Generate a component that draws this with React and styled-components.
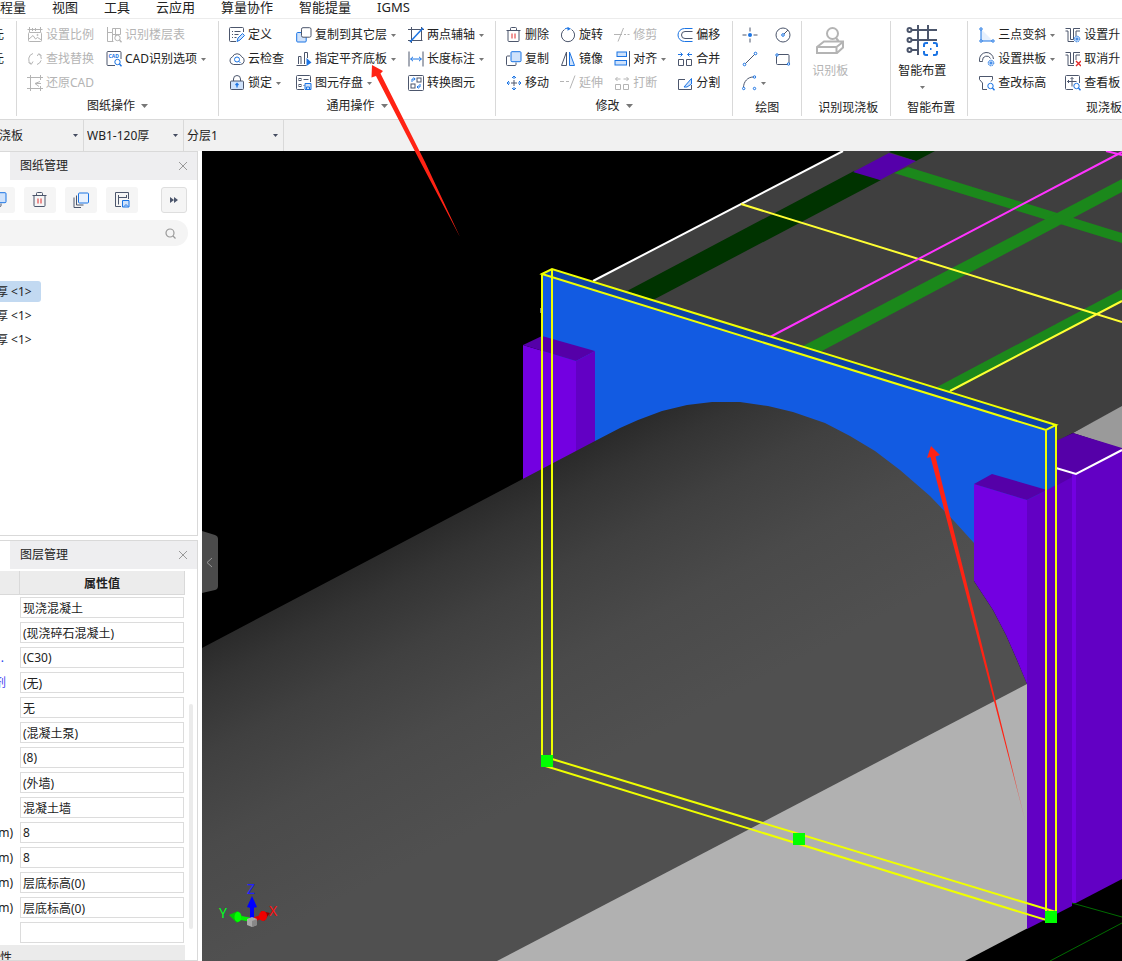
import React, { useState } from 'react'
import styled, { createGlobalStyle, css } from 'styled-components'

const GlobalStyle = createGlobalStyle`
    :root {
        --ink: #222;
        --line: #d9d9d9;
        --icon: #4c566c;
        --blue: #1b74e4;
        --tint: #cfe2fb;
        --muted: #b4b4b4;
    }

    * {
        box-sizing: border-box;
    }

    body {
        margin: 0;
        background: #fff;
        color: var(--ink);
    }

    body, button, input, select {
        font-family: 'Noto Sans', 'Noto Sans CJK SC', sans-serif;
        font-size: 12px;
        line-height: 16px;
    }

    button {
        padding: 0;
        border: none;
        background: none;
        color: inherit;
        cursor: pointer;
    }
`

const Page = styled.div`
    display: flex;
    flex-direction: column;
    position: relative;
    height: 100vh;
    overflow: hidden;
`

const MenuBar = styled.nav`
    display: flex;
    flex: none;
    gap: 26px;
    height: 19px;
    margin-left: -13px;
    border-bottom: 1px solid #ececec;

    a {
        color: var(--ink);
        font-size: 13px;
        line-height: 14px;
        text-decoration: none;
        white-space: nowrap;
    }
`

const Ribbon = styled.header`
    display: flex;
    flex: none;
    padding: 2px 0 3px;
    border-bottom: 1px solid var(--line);
`

const Group = styled.section`
    display: flex;
    flex-direction: column;
    flex: ${p => (p.$grow ? '1 0 0' : 'none')};
    padding-top: 2px;
    border-right: ${p => (p.$grow ? 'none' : '1px solid var(--line)')};
    overflow: hidden;
`

const Tools = styled.div`
    display: grid;
    grid-template-rows: repeat(3, 24px);
    grid-auto-flow: column;
    justify-content: start;
    column-gap: ${p => p.$gap || 12}px;
    padding: 0 ${p => p.$end || 10}px 0 ${p => p.$start || 10}px;
`

const CutTools = styled(Tools)`
    margin-left: -8px;
    padding: 0 12px 0 0;
`

const GroupTitle = styled.h2`
    display: flex;
    align-items: center;
    justify-content: ${p => p.$align || 'center'};
    gap: 6px;
    height: 21px;
    margin: 0;
    padding: ${p => (p.$low ? 4 : 0)}px ${p => (p.$inset ? '12px 0 16px' : '0 0 0')};
    font-size: 12px;
    font-weight: 400;
    white-space: nowrap;
`

const ToolButton = styled.button`
    display: flex;
    align-items: center;
    gap: 3px;
    white-space: nowrap;

    ${p => p.disabled && css`
        color: var(--muted);
        cursor: default;

        svg {
            --icon: var(--muted);
            --blue: var(--muted);
            --tint: #fff;
        }
    `}
`

const BigButton = styled(ToolButton)`
    flex-direction: column;
    align-self: flex-start;
    gap: 7px;
    height: 72px;
    margin: 0 ${p => (p.$wide ? 10 : 7)}px;
    padding-top: 1px;
`

const CaretSvg = styled.svg`
    flex: none;
    margin-left: ${p => p.$space || 0}px;
    fill: ${p => p.$color || '#777'};
`

const Glyph = styled.svg`
    flex: none;
    fill: none;
    stroke: var(--icon);
    stroke-width: ${p => p.$weight || 1};
`

const ComboBar = styled.div`
    display: flex;
    flex: none;
    height: 31px;
    margin-left: -16px;
    background: #f1f1f1;
`

const Combo = styled.label`
    display: grid;
    align-items: center;
    width: 100px;
    border-right: 1px solid var(--line);

    select, svg {
        grid-area: 1 / 1;
    }

    select {
        appearance: none;
        width: 100%;
        padding: 0 3px;
        border: none;
        background: none;
        color: var(--ink);
    }

    svg {
        justify-self: end;
        margin-right: 5px;
        pointer-events: none;
    }
`

const Workspace = styled.main`
    display: flex;
    flex: 1;
    min-height: 0;
`

const Sidebar = styled.aside`
    display: flex;
    flex-direction: column;
    flex: none;
    gap: 4px;
    width: 202px;
    padding-right: 4px;
`

const Panel = styled.section`
    display: flex;
    flex-direction: column;
    flex: ${p => (p.$fill ? '1 1 0' : 'none')};
    min-height: ${p => (p.$fill ? 0 : 385)}px;
    border: 1px solid var(--line);
    border-left: none;
    overflow: hidden;
`

const PanelHead = styled.div`
    display: flex;
    flex: none;
    align-items: center;
    justify-content: space-between;
    height: 28px;
    margin-left: 10px;
    padding: 0 9px 0 10px;
    background: #eeeef0;

    h3 {
        margin: 0;
        font-size: 12px;
        font-weight: 400;
    }

    button {
        display: flex;
    }
`

const PanelTools = styled.div`
    display: flex;
    gap: 9px;
    margin: 7px 10px 0 -17px;
`

const PanelButton = styled.button`
    display: flex;
    align-items: center;
    justify-content: center;
    width: ${p => (p.$more ? 26 : 32)}px;
    height: 26px;
    margin-left: ${p => (p.$more ? 'auto' : 0)};
    border: ${p => (p.$more ? '1px solid #dedede' : 'none')};
    border-radius: 3px;
    background: #f5f5f5;
`

const Search = styled.label`
    display: flex;
    align-items: center;
    height: 26px;
    margin: 7px 9px 0 0;
    padding-right: 12px;
    border-radius: 0 13px 13px 0;
    background: #f4f4f4;

    input {
        flex: 1;
        min-width: 0;
        border: none;
        background: none;
    }
`

const DrawingList = styled.ul`
    display: flex;
    flex-direction: column;
    align-items: flex-start;
    gap: 3px;
    margin: 35px 0 0 -4px;
    padding: 0;
    list-style: none;
`

const Drawing = styled.button`
    height: 21px;
    padding-right: 9px;
    border-radius: 3px;
    background: ${p => (p.$selected ? '#c2d9f1' : 'none')};
    white-space: pre;
`

const Properties = styled.div`
    display: flex;
    flex: 1;
    gap: 4px;
    min-height: 0;
    margin-top: 2px;
`

const PropertyTable = styled.table`
    width: 185px;
    height: max-content;
    table-layout: fixed;
    border-collapse: separate;
    border-spacing: 0;

    thead th {
        height: 24px;
        padding: 2px 0 0;
        border-right: 1px solid var(--line);
        border-bottom: 1px solid var(--line);
        background: #ececec;
        font-weight: 700;
    }

    thead th:first-child {
        width: 20px;
    }

    tbody th {
        height: 25px;
        padding: 0;
        font-weight: 400;
        white-space: nowrap;
    }

    td {
        padding: 0 1px 0 0;
    }

    input {
        display: block;
        width: 100%;
        height: 21px;
        padding: 0 2px;
        border: 1px solid #dcdcdc;
        color: var(--ink);
    }

    tfoot th {
        height: 24px;
        padding: 2px 0 0;
        background: #ebebeb;
        font-weight: 400;
        text-align: left;
    }
`

const PropertyName = styled.span`
    display: flex;
    justify-content: flex-end;
    padding-right: ${p => p.$inset || 7}px;
    color: ${p => p.$color || 'inherit'};
`

const ScrollThumb = styled.div`
    flex: none;
    align-self: flex-start;
    width: 4px;
    height: 225px;
    margin-top: 133px;
    border-radius: 2px;
    background: #ebebeb;
`

const Viewport = styled.section`
    display: flex;
    flex: 1;
    position: relative;
    min-width: 0;
    background: #000;

    > svg {
        flex: 1;
        width: 100%;
        height: 100%;
    }
`

const Collapse = styled.button`
    position: absolute;
    top: 380px;
    left: 0;

    svg {
        display: block;
    }
`

const Pointer = styled.svg`
    position: absolute;
    top: 64px;
    left: 370px;
    fill: #ff2314;
    pointer-events: none;
`

const B = { stroke: 'var(--blue)' }
const T = { stroke: 'var(--blue)', fill: 'var(--tint)' }
const DOT = { stroke: 'var(--blue)', fill: '#fff' }

// small magnifier that several icons carry in the lower right corner
const Lens = () => (
    <g {...B}>
        <circle cx="11.5" cy="11" r="2.7" fill="#fff" />
        <path d="M13.5 13l2 2.3" strokeWidth="1.4" />
    </g>
)

const Gear = () => (
    <g {...B} strokeWidth="1">
        <circle cx="12" cy="12" r="2.8" fill="#cfe2fb" strokeDasharray="1.4 .8" />
        <circle cx="12" cy="12" r="1" />
    </g>
)

const icons = {
    scale: <>
        <path d="M.5 2.5h15M2.5 0v5M5.5 1v3M8.5 1v3M13.5 0v5" />
        <rect x="1.5" y="5.5" width="13" height="9" rx="1" />
        <path d="M2 12l4-3.500 2.500 3.500 2-1.500 4 2.500" />
        <circle cx="10.500" cy="8" r=".6" />
    </>,
    floors: <>
        <path d="M1.500 0v14.500h6M1.500 5.500h5v-4M6.500 5.500v9M6.500 1.500h8v6M9.500 1v6.500M6.500 7.500h8M9.500 7.500v2" />
        <Lens />
    </>,
    replace: <>
        <path d="M6 2.500a6 6 0 0 0-2 10.500M1.500 11.500l2.800 1.800L6 10.500" />
        <path d="M10 13.500a6 6 0 0 0 2-10.500M14.500 4.500l-2.800-1.800L10 5.500" strokeDasharray="6 1.500" />
    </>,
    restore: <>
        <path d="M3.500 0v16M0 2.500h16M0 13.500h16M13.500 0v5M13.500 11v5" />
        <path d="M13 6.500L8 8.500l4 3M8 8.500h6" />
    </>,
    cad: <>
        <path d="M9 14.500H2a1 1 0 0 1-1-1v-12a1 1 0 0 1 1-1h12a1 1 0 0 1 1 1V8" />
        <text x="2.500" y="6.500" fontSize="5" fontWeight="700" fill="var(--blue)" stroke="none">CAD</text>
        <Lens />
    </>,
    define: <>
        <path d="M14.500 5V1.500a1 1 0 0 0-1-1h-12a1 1 0 0 0-1 1v12a1 1 0 0 0 1 1H7" />
        <path d="M3 4.500h1M5.500 4.500h6M3 7.500h1M5.500 7.500h4M3 10.500h1M5.500 10.500h2" />
        <path d="M8 14.500l1-3.500 4.500-4.500 2 2L11 13z" {...T} />
    </>,
    cloud: <>
        <path d="M4.500 13.500a4 4 0 0 1-1-7.700 5 5 0 0 1 9.200 0 4 4 0 0 1-1.200 7.700z" />
        <circle cx="8" cy="8.500" r="2.500" {...B} />
        <path d="M9.800 10.300l1.700 1.700" {...B} />
    </>,
    lock: <>
        <path d="M4.500 6V4a3.500 3.500 0 0 1 7 0v2" />
        <rect x="1.500" y="6" width="13" height="8.500" rx="1" fill="var(--tint)" />
        <path d="M8 12.500V8.500M6.500 10L8 8.500 9.500 10" stroke="var(--blue)" strokeWidth="1.300" />
    </>,
    copyFloor: <>
        <rect x=".7" y="5.500" width="9.500" height="9.500" rx="1" {...T} />
        <rect x="5.500" y=".7" width="9.500" height="9.500" rx="1.500" fill="#fff" />
    </>,
    flush: <>
        <path d="M.5 14.500h10M2.500 13V5.500h2.500V13M8.500 13V1.500h3V7" />
        <path d="M10.500 7v8l5-3.500z" fill="var(--blue)" stroke="none" />
    </>,
    save: <>
        <path d="M8 14.500H1.500a1 1 0 0 1-1-1v-12a1 1 0 0 1 1-1h12a1 1 0 0 1 1 1V7M7.500 4.500h5M7.500 10.500h1" />
        <rect x="3" y="3.500" width="2" height="2" />
        <rect x="3" y="9.500" width="2" height="2" />
        <path d="M9 8.500h6v6H9zM10.500 14.500v-2.500h3v2.500" {...T} />
    </>,
    axis: <>
        <path d="M3.500 0v16M0 2.500h16M0 13.500h14.500M13.500 0v13.500" />
        <path d="M2 15L15 1" stroke="var(--blue)" strokeWidth="1.500" />
    </>,
    measure: <>
        <path d="M1 .5v15M15 .5v15" />
        <path d="M2.500 8h11M5 5.800L2.700 8 5 10.200M11 5.800L13.300 8 11 10.200" {...B} />
    </>,
    convert: <>
        <rect x=".5" y=".5" width="15" height="15" rx="1" />
        <rect x="9" y="3" width="4" height="4" />
        <rect x="3" y="9" width="4" height="4" />
        <path d="M4 7V4h3M5.500 2.500L7.200 4 5.500 5.500M12 9v3H9M10.500 10.500L9 12l1.500 1.500" {...B} />
    </>,
    trash: <>
        <path d="M.5 3.500h14M4.500 3V1.500a1 1 0 0 1 1-1h4a1 1 0 0 1 1 1V3M2 3.500v10a1 1 0 0 0 1 1h9a1 1 0 0 0 1-1v-10" />
        <path d="M6 6.500v5M9 6.500v5" stroke="#e02b2b" />
    </>,
    copy: <>
        <path d="M4 5H1.500a1 1 0 0 0-1 1v7.500a1 1 0 0 0 1 1h7.500a1 1 0 0 0 1-1V11.500" />
        <rect x="5" y=".7" width="10" height="10" rx="1" {...T} />
    </>,
    move: <>
        <path d="M8 5v6M5 8h6" />
        <path d="M8 4V1M6 3l2-2 2 2M8 12v3M6 13l2 2 2-2M4 8H1M3 6L1 8l2 2M12 8h3M13 6l2 2-2 2" {...B} />
    </>,
    rotate: <>
        <path d="M4.500 2.500a6.600 6.600 0 1 0 7 0" />
        <path d="M5 1.800A6 6 0 0 1 9 1.300" {...B} />
        <path d="M7.500 0l3.500 1.700-3.500 2z" fill="var(--blue)" stroke="none" />
    </>,
    mirror: <>
        <path d="M6.500 1v13.500h-5z" />
        <path d="M9.500 1v13.500h5z" {...T} />
    </>,
    extend: <path d="M0 6.500h4M6 6.500h3M10 13.500L15 .5" />,
    trim: <path d="M0 7.500h8M10 7.500h2M13.500 7.500h2M4 14.500L9.500 1" />,
    align: <>
        <path d="M15.500 0v15.500" />
        <rect x="3" y="1" width="9.500" height="4.500" {...T} />
        <rect x="1" y="9.500" width="11.500" height="4.500" {...T} />
    </>,
    split: <>
        <path d="M1.500 9.500h5v5h-5zM9.500 9.500h5v5h-5z" />
        <path d="M6.500 4h-5M3.500 2L1.500 4l2 2M9.500 4h5M12.500 2l2 2-2 2" {...B} />
    </>,
    merge: <>
        <path d="M1.500 8.500h5v6h-5zM9.500 8.500h5v6h-5z" />
        <path d="M1 3.500h4.500M3.500 1.500l2 2-2 2M15 3.500h-4.500M12.500 1.500l-2 2 2 2" {...B} />
    </>,
    offset: <>
        <path d="M15.500 4.500H8a3.500 3.500 0 0 0 0 7h7.500" />
        <path d="M15.500 1.500H7.500a6.500 6.500 0 0 0 0 13h8" {...B} />
    </>,
    divide: <>
        <path d="M8 4.500H1.500v10h13V10" />
        <path d="M7 12l7.500-8.500V9L10 12z" {...T} />
    </>,
    point: <>
        <path d="M8 .5v4M8 11.500v4M.5 8h4M11.500 8h4" />
        <circle cx="8" cy="8" r="2" fill="var(--blue)" stroke="none" />
    </>,
    line: <>
        <path d="M3 13L13 3" />
        <circle cx="2.500" cy="13.500" r="1.300" {...DOT} />
        <circle cx="13.500" cy="2.500" r="1.300" {...DOT} />
    </>,
    arc: <>
        <path d="M1.500 12.500C1.500 6.500 6 2 11 2" />
        <circle cx="1.700" cy="13.500" r="1.200" {...DOT} />
        <circle cx="12.500" cy="2" r="1.200" {...DOT} />
        <circle cx="12.500" cy="13.500" r="1.200" {...DOT} />
    </>,
    circle: <>
        <circle cx="8" cy="8" r="7" />
        <path d="M9 7l4-4" />
        <circle cx="8" cy="8" r="1.300" {...DOT} />
    </>,
    rect: <>
        <rect x="1.500" y="3.500" width="12.500" height="10" rx="1" />
        <circle cx="2" cy="4" r="1.200" {...DOT} />
        <circle cx="13.500" cy="13" r="1.200" {...DOT} />
    </>,
    slope: <>
        <path d="M2 2l12 12H2z" fill="#e6f0fd" stroke="none" />
        <path d="M2 3v11h12" {...B} />
        <circle cx="2" cy="2" r="1.200" {...DOT} />
        <circle cx="2" cy="14" r="1.200" {...DOT} />
        <circle cx="14" cy="14" r="1.200" {...DOT} />
    </>,
    arch: <>
        <path d="M.5 9a7 7 0 0 1 14-1M3.500 9.500a4.200 4.200 0 0 1 8-2M.5 9v1.500h3V9.500" />
        <Gear />
    </>,
    elevation: <>
        <path d="M8 14.500H3.500V8L.5 4.500v-3h13v3L12 6.500" />
        <Lens />
    </>,
    raise: <>
        <path d="M.5 1.500h5v11h3v-11h6.500M.5 4h2.500v10.500h6M11 9V4h4" />
        <Gear />
    </>,
    unraise: <>
        <path d="M.5 1.500h5v11h3v-11h6.500M.5 4h2.500v10.500h6M11 9V4h4" />
        <path d="M11 10l5 5M16 10l-5 5" stroke="#e02b2b" strokeWidth="1.400" />
    </>,
    view: <>
        <path d="M8 14.500H1.500a1 1 0 0 1-1-1v-12a1 1 0 0 1 1-1h12a1 1 0 0 1 1 1V8M7 2.500v9M2.500 6.500h9M5.500 4L7 2.500 8.500 4M4 5L2.500 6.500 4 8" />
        <Lens />
    </>,
    layers: <>
        <rect x="5.500" y="1" width="10" height="10" rx="1" stroke="var(--blue)" fill="#e9f2fe" />
        <path d="M3.500 3.500v9.500h7M1 5.500v10h7" />
    </>,
    store: <>
        <path d="M7 14.500H1.500v-14h13V7M4.500 3v9.500M4.500 5.500h8M12.500 3v3" />
        <path d="M8.500 8.500h6.500v6.500H8.500zM10 14.500l2-2 2 2" {...T} />
    </>
}

const Icon = ({ name, size = 16 }) => (
    <Glyph width={size} height={size} viewBox="0 0 16 16" aria-hidden="true">{icons[name]}</Glyph>
)

const Caret = ({ wide, space, color }) => (
    <CaretSvg width={wide ? 7 : 5} height={wide ? 4 : 3} viewBox="0 0 6 3" preserveAspectRatio="none" $space={space} $color={color} aria-hidden="true">
        <path d="M0 0h6L3 3z" />
    </CaretSvg>
)

const Tool = ({ icon, label, caret, disabled, hint }) => (
    <ToolButton type="button" disabled={disabled} aria-label={hint}>
        {icon && <Icon name={icon} />}
        {label}
        {caret && <Caret space={label ? 1 : 0} />}
    </ToolButton>
)

const BoardIcon = () => (
    <Glyph width="32" height="32" viewBox="0 0 32 32" $weight={2} aria-hidden="true">
        <circle cx="18.500" cy="9.500" r="5.500" />
        <path d="M22 14l2.500 3M3 23l7-5.500h19v6L23 29H3zM3 23h19.500v6M22.500 23l6.500-5" />
    </Glyph>
)

const LayoutIcon = () => (
    <Glyph width="32" height="32" viewBox="0 0 32 32" $weight={2} aria-hidden="true">
        <path d="M6 6h25M6 16h25M6 26h7M12 1v30M22 1v16" />
        <circle cx="3.500" cy="6" r="2" />
        <circle cx="3.500" cy="16" r="2" />
        <circle cx="3.500" cy="26" r="2" />
        <rect x="15.500" y="18" width="16.500" height="14" fill="#fff" stroke="none" />
        <path d="M18 23v-2a2 2 0 0 1 2-2h2M27 19h2a2 2 0 0 1 2 2v2M31 27v2a2 2 0 0 1-2 2h-2M22 31h-2a2 2 0 0 1-2-2v-2M24 25h1.500" stroke="var(--blue)" />
    </Glyph>
)

const CloseIcon = () => (
    <Glyph width="10" height="10" viewBox="0 0 10 10" aria-hidden="true">
        <path d="M1 1l8 8M9 1L1 9" stroke="#999" />
    </Glyph>
)

const drawings = ['厚 <1>', '厚 <1>', '厚 <1>']

const properties = [
    { value: '现浇混凝土' },
    { value: '(现浇碎石混凝土)' },
    { value: '(C30)', name: '.', color: '#2440f0', inset: 16 },
    { value: '(无)', name: '剂', color: '#3a40f0', inset: 14 },
    { value: '无' },
    { value: '(混凝土泵)' },
    { value: '(8)' },
    { value: '(外墙)' },
    { value: '混凝土墙' },
    { value: '8', name: 'm)' },
    { value: '8', name: 'm)' },
    { value: '层底标高(0)', name: 'm)' },
    { value: '层底标高(0)', name: 'm)' },
    { value: '' }
]

const Scene = () => (
    <svg viewBox="202 151 920 810" preserveAspectRatio="xMinYMin slice" role="img" aria-label="3D">
        <defs>
            <linearGradient id="vault" gradientUnits="userSpaceOnUse" x1="595" y1="441" x2="762" y2="761">
                <stop offset="0" stopColor="#2a2a2a" />
                <stop offset=".1" stopColor="#343434" />
                <stop offset=".27" stopColor="#404040" />
                <stop offset=".5" stopColor="#4a4a4a" />
                <stop offset=".8" stopColor="#505050" />
            </linearGradient>
            <linearGradient id="tail" gradientUnits="userSpaceOnUse" x1="1008" y1="752" x2="1026" y2="824">
                <stop offset="0" stopColor="#ff2314" />
                <stop offset="1" stopColor="#ff2314" stopOpacity=".2" />
            </linearGradient>
        </defs>

        {/* roof slab with its beams */}
        <path d="M593 281L843 151H1122V407L1050 445L542 290z" fill="#3f3f3f" />
        <path d="M627 291L854 171L881 180L653 300zM889 152L891 151H935L916 161z" fill="#003300" />
        <path d="M889 153L916 161L880 180L853 172z" fill="#5500aa" />
        <g fill="#1b881b">
            <path d="M908 167L1122 233V243L894 173z" />
            <path d="M803 346L1122 179V192L820 352z" />
            <path d="M937 387L1122 289V301L951 392z" />
        </g>
        <g fill="none" strokeWidth="2">
            <path d="M593 281L843 151" stroke="#fff" />
            <path d="M741 204L1122 322M950 391L1122 301" stroke="#ffff33" />
            <path d="M770 337L1122 152M1106 151L1122 155" stroke="#ff33ff" />
            <path d="M541 308V313" stroke="#fff" strokeWidth="1" />
        </g>

        {/* wall panel */}
        <path d="M542 274L1047 430V560H974L560 480L542 470z" fill="#125be2" />
        <path d="M542 274L552 269L1056 425L1047 430z" fill="#0e43a6" />
        <path d="M1047 430L1056 425V490H1047z" fill="#1150c8" />

        {/* left column */}
        <path d="M523 345L576 361V470L523 490z" fill="#7300e1" />
        <path d="M523 345L542 336L595 351L576 361z" fill="#5500a8" />
        <path d="M576 361L595 351V460H576z" fill="#6200c4" />

        <path d="M202 648L595 441L620 428L638 420L662 411L687 405L712 402H740L768 406L793 412L825 423L850 436L875 451L900 470L930 496L955 522L974 543V581L993 610L1006 635L1017 660L1028 686L497 963L202 961z" fill="url(#vault)" />
        <path d="M1028 683.500L497 961H965L1028 928z" fill="#b1b1b1" />

        {/* right columns */}
        <path d="M1073 433L1122 406V449z" fill="#9a9a9a" />
        <path d="M1056 441L1073 433L1122 448V452L1076 474L1072 478L1056 487z" fill="#5500a8" />
        <path d="M1076 474L1122 450V879L1076 903z" fill="#6200c4" />
        <path d="M1027 500L1047 490L1072 476V906L1027 929z" fill="#6200c4" />
        <path d="M1056 468L1072 473V477L1056 486z" fill="#5500a8" />
        <path d="M1072 474H1076V903H1072z" fill="#7300e1" />
        <path d="M974 484L1027 500V684L1017 660L1006 635L993 610L974 581z" fill="#7300e1" />
        <path d="M974 484L992 474L1047 490L1027 500z" fill="#5500a8" />
        <path d="M1056 468L1076 474L1122 450" fill="none" stroke="#fff" strokeWidth="2" />
        <path d="M1072 903L1122 917M1050 961L1122 923" stroke="#006b00" />

        {/* selection frame and grips */}
        <path d="M542 274L552 269L1056 425L1046 430zM542 274V765L1046 920V430M552 269V759L1056 912V425" fill="none" stroke="#efff00" strokeWidth="2" />
        <g fill="#00ff00">
            <rect x="541" y="755" width="12" height="12" />
            <rect x="793" y="833" width="12" height="12" />
            <rect x="1045" y="911" width="12" height="12" />
        </g>

        <path d="M931 446L940 455L935.500 456.500L1026 824L930.500 457L927 458z" fill="url(#tail)" />

        {/* axis triad */}
        <g fontSize="14" fontFamily="'Noto Sans', sans-serif">
            <text x="247" y="894" fill="#2020ff">Z</text>
            <text x="219" y="918" fill="#00ff20">Y</text>
            <text x="269" y="916" fill="#ff1010">X</text>
        </g>
        <path d="M252 920L236 917" stroke="#00f000" strokeWidth="4" />
        <path d="M229 915L238 911L242 917L237 923z" fill="#00c800" />
        <ellipse cx="238" cy="917" rx="3.500" ry="5" fill="#00ff00" />
        <path d="M252 920L264 916" stroke="#e00000" strokeWidth="4" />
        <path d="M270 913L261 911L264 921z" fill="#900000" />
        <ellipse cx="263" cy="916" rx="4" ry="5" fill="#f00000" />
        <path d="M252 919V905" stroke="#0000ff" strokeWidth="4" />
        <path d="M252 896L257 907Q252 909 247 907z" fill="#0000ff" />
        <path d="M247 919L252 917L257 919V925L252 927L247 925z" fill="#a8a8a8" />
        <path d="M252 921L257 919V925L252 927z" fill="#888" />
    </svg>
)

const App = () => {
    const [selected, setSelected] = useState(0)

    return (
        <Page>
            <GlobalStyle />

            <MenuBar>
                {['工程量', '视图', '工具', '云应用', '算量协作', '智能提量', 'IGMS'].map(item => (
                    <a key={item} href="#">{item}</a>
                ))}
            </MenuBar>

            <Ribbon>
                <Group>
                    <CutTools>
                        <Tool label="元" />
                        <Tool label="元" />
                    </CutTools>
                </Group>

                <Group>
                    <Tools $end={12}>
                        <Tool icon="scale" label="设置比例" disabled />
                        <Tool icon="replace" label="查找替换" disabled />
                        <Tool icon="restore" label="还原CAD" disabled />
                        <Tool icon="floors" label="识别楼层表" disabled />
                        <Tool icon="cad" label="CAD识别选项" caret />
                    </Tools>
                    <GroupTitle>图纸操作<Caret wide /></GroupTitle>
                </Group>

                <Group>
                    <Tools $end={11}>
                        <Tool icon="define" label="定义" />
                        <Tool icon="cloud" label="云检查" />
                        <Tool icon="lock" label="锁定" caret />
                        <Tool icon="copyFloor" label="复制到其它层" caret />
                        <Tool icon="flush" label="指定平齐底板" caret />
                        <Tool icon="save" label="图元存盘" caret />
                        <Tool icon="axis" label="两点辅轴" caret />
                        <Tool icon="measure" label="长度标注" caret />
                        <Tool icon="convert" label="转换图元" />
                    </Tools>
                    <GroupTitle>通用操作<Caret wide /></GroupTitle>
                </Group>

                <Group>
                    <Tools $gap={11} $end={12}>
                        <Tool icon="trash" label="删除" />
                        <Tool icon="copy" label="复制" />
                        <Tool icon="move" label="移动" />
                        <Tool icon="rotate" label="旋转" />
                        <Tool icon="mirror" label="镜像" />
                        <Tool icon="extend" label="延伸" disabled />
                        <Tool icon="trim" label="修剪" disabled />
                        <Tool icon="align" label="对齐" caret />
                        <Tool icon="split" label="打断" disabled />
                        <Tool icon="offset" label="偏移" />
                        <Tool icon="merge" label="合并" />
                        <Tool icon="divide" label="分割" />
                    </Tools>
                    <GroupTitle>修改<Caret wide /></GroupTitle>
                </Group>

                <Group>
                    <Tools $gap={9} $start={9}>
                        <Tool icon="point" hint="点" />
                        <Tool icon="line" hint="直线" />
                        <Tool icon="arc" hint="弧" caret />
                        <Tool icon="circle" hint="圆" />
                        <Tool icon="rect" hint="矩形" />
                    </Tools>
                    <GroupTitle $low>绘图</GroupTitle>
                </Group>

                <Group>
                    <BigButton type="button" disabled $wide><BoardIcon />识别板</BigButton>
                    <GroupTitle $low $inset>识别现浇板</GroupTitle>
                </Group>

                <Group>
                    <BigButton type="button"><LayoutIcon />智能布置<Caret /></BigButton>
                    <GroupTitle $low $inset>智能布置</GroupTitle>
                </Group>

                <Group $grow>
                    <Tools $gap={10} $start={11}>
                        <Tool icon="slope" label="三点变斜" caret />
                        <Tool icon="arch" label="设置拱板" caret />
                        <Tool icon="elevation" label="查改标高" />
                        <Tool icon="raise" label="设置升" />
                        <Tool icon="unraise" label="取消升" />
                        <Tool icon="view" label="查看板" />
                    </Tools>
                    <GroupTitle $low $align="flex-end">现浇板</GroupTitle>
                </Group>
            </Ribbon>

            <ComboBar>
                {['现浇板', 'WB1-120厚', '分层1'].map(value => (
                    <Combo key={value}>
                        <select aria-label={value}>
                            <option>{value}</option>
                        </select>
                        <Caret color="#444c60" />
                    </Combo>
                ))}
            </ComboBar>

            <Workspace>
                <Sidebar>
                    <Panel>
                        <PanelHead>
                            <h3>图纸管理</h3>
                            <button type="button" aria-label="关闭"><CloseIcon /></button>
                        </PanelHead>
                        <PanelTools>
                            <PanelButton type="button" aria-label="复制"><Icon name="copy" /></PanelButton>
                            <PanelButton type="button" aria-label="删除"><Icon name="trash" /></PanelButton>
                            <PanelButton type="button" aria-label="图层"><Icon name="layers" /></PanelButton>
                            <PanelButton type="button" aria-label="保存"><Icon name="store" /></PanelButton>
                            <PanelButton type="button" aria-label="更多" $more>
                                <svg width="8" height="6" viewBox="0 0 8 6" fill="#4c566c"><path d="M0 0l4 3-4 3zM4 0l4 3-4 3z" /></svg>
                            </PanelButton>
                        </PanelTools>
                        <Search>
                            <input type="text" aria-label="搜索" />
                            <Glyph width="11" height="11" viewBox="0 0 11 11" aria-hidden="true">
                                <g stroke="#999" strokeWidth="1.200">
                                    <circle cx="5" cy="5" r="4" />
                                    <path d="M8 8l2.500 2.500" />
                                </g>
                            </Glyph>
                        </Search>
                        <DrawingList>
                            {drawings.map((name, i) => (
                                <li key={i}>
                                    <Drawing type="button" $selected={i === selected} onClick={() => setSelected(i)}>{name}</Drawing>
                                </li>
                            ))}
                        </DrawingList>
                    </Panel>

                    <Panel $fill>
                        <PanelHead>
                            <h3>图层管理</h3>
                            <button type="button" aria-label="关闭"><CloseIcon /></button>
                        </PanelHead>
                        <Properties>
                            <PropertyTable>
                                <thead>
                                    <tr>
                                        <th></th>
                                        <th>属性值</th>
                                    </tr>
                                </thead>
                                <tbody>
                                    {properties.map((row, i) => (
                                        <tr key={i}>
                                            <th scope="row">
                                                <PropertyName $color={row.color} $inset={row.inset}>{row.name}</PropertyName>
                                            </th>
                                            <td><input type="text" aria-label={`属性值 ${i + 1}`} defaultValue={row.value} /></td>
                                        </tr>
                                    ))}
                                </tbody>
                                <tfoot>
                                    <tr><th colSpan="2">性</th></tr>
                                </tfoot>
                            </PropertyTable>
                            <ScrollThumb />
                        </Properties>
                    </Panel>
                </Sidebar>

                <Viewport>
                    <Scene />
                    <Collapse type="button" aria-label="收起">
                        <svg width="16" height="62" viewBox="0 0 16 62" fill="none">
                            <path d="M0 0l13 4q3 1 3 4v47q0 3-3 4L0 62z" fill="#4b4b4b" />
                            <path d="M10 27l-5 4.500 5 4.500" stroke="#999" />
                        </svg>
                    </Collapse>
                </Viewport>
            </Workspace>

            <Pointer width="92" height="174" viewBox="370 64 92 174" aria-hidden="true">
                <path d="M372 65L383 71L380.500 73.500L425 162L460 237L421 163L376 76L371.500 77.500z" />
            </Pointer>
        </Page>
    )
}

export default App
